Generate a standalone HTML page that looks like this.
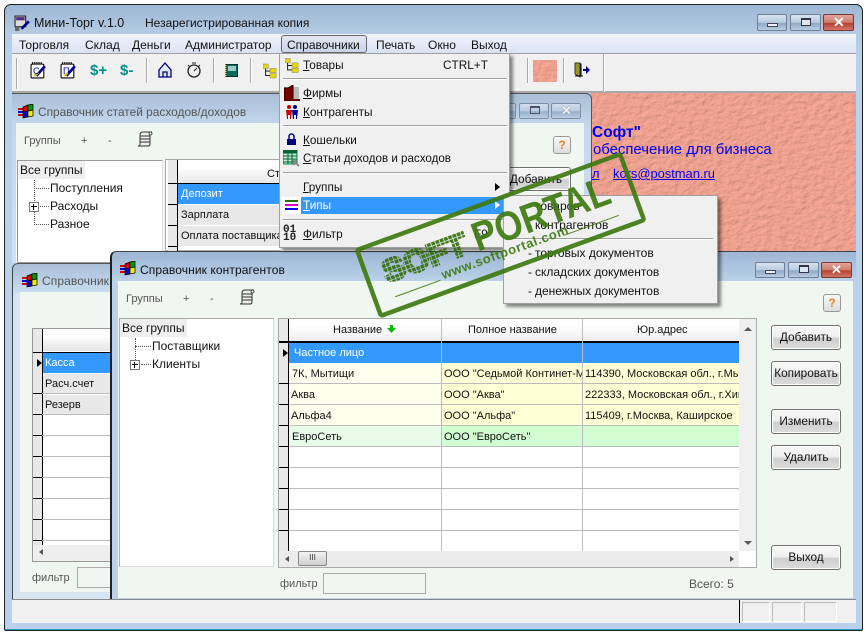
<!DOCTYPE html>
<html><head><meta charset="utf-8"><style>
html,body{margin:0;padding:0;background:#fff;width:868px;height:637px;overflow:hidden}
*{box-sizing:border-box}
body{position:relative;font:12px/14px "Liberation Sans","DejaVu Sans",sans-serif;color:#111}
.a{position:absolute}
.t{position:absolute;white-space:nowrap;line-height:14px;margin-top:1px}
.s{font-size:11px}
.m{font-size:11.8px}
.g{color:#555}
.btn{position:absolute;width:70px;height:25px;border:1px solid #707070;border-radius:3px;background:linear-gradient(#f6f6f6 0,#f0f0f0 45%,#cfcfcf 55%,#dcdcdc 100%);text-align:center;line-height:23px;font-size:11.8px;box-shadow:inset 0 0 0 1px #fff}
.wb{position:absolute;height:16px;border:1px solid #6f7f95;border-radius:2px;background:linear-gradient(#d8e3f0,#b9cbe0 50%,#8fa8c6 55%,#b9cde2)}
.wb.x{background:linear-gradient(#e2a49a,#cf7b6c 50%,#b5402f 55%,#d0776a);border-color:#7a3a33}
.sep{position:absolute;height:2px;background:#a0a0a0;border-bottom:1px solid #fff}
u{text-decoration:underline}
.vs{position:absolute;width:2px;background:#aaa;border-right:1px solid #fff}
.h{background:#3399ff;color:#fff}
</style></head><body>
<svg width="0" height="0" style="position:absolute">
<defs>
<symbol id="flag" viewBox="0 0 16 16"><rect x="0" y="4" width="5" height="2" fill="#c00"/><rect x="0" y="7" width="5" height="2" fill="#00c"/><rect x="0" y="10" width="5" height="2" fill="#c00"/><path d="M5 3L10 1V7L5 8Z" fill="#d00" stroke="#000" stroke-width=".7"/><path d="M10 1L15 0V6L10 7Z" fill="#090" stroke="#000" stroke-width=".7"/><path d="M5 8L10 7V13L5 14Z" fill="#00c" stroke="#000" stroke-width=".7"/><path d="M10 7L15 6V12L10 13Z" fill="#ee0" stroke="#000" stroke-width=".7"/></symbol>
<symbol id="tree" viewBox="0 0 16 16"><path d="M3 4V13H8M3 8H8" stroke="#000" fill="none"/><rect x="0" y="0" width="6" height="5" fill="#e8d800" stroke="#886"  stroke-width=".6"/><rect x="8" y="5" width="7" height="5" fill="#e8d800" stroke="#886" stroke-width=".6"/><rect x="8" y="11" width="7" height="5" fill="#e8d800" stroke="#886" stroke-width=".6"/></symbol>
<symbol id="note" viewBox="0 0 16 16"><rect x="1" y="2" width="12" height="13" rx="1" fill="#fff" stroke="#000"/><path d="M2 1h10" stroke="#000" stroke-dasharray="1 1" stroke-width="2"/><path d="M6 13L14 4" stroke="#000080" stroke-width="2.5"/><path d="M4 13L8 10" stroke="#d8c000" stroke-width="2"/></symbol>
<symbol id="scroll" viewBox="0 0 16 16"><path d="M3 4C3 2 4 1 6 1H15C13 1 13 3 13 4V13C13 15 12 15 10 15H1C3 15 3 14 3 13Z" fill="#eee" stroke="#333"/><path d="M3 5H13M3 8H13M3 11H13" stroke="#333"/><circle cx="13.500" cy="2.500" r="1.500" fill="#fff" stroke="#333" stroke-width=".8"/></symbol>
<pattern id="dots" width="4.5" height="4.5" patternUnits="userSpaceOnUse"><rect width="3.6" height="3.6" fill="#35700c"/></pattern>
<filter id="tex" x="0" y="0" width="100%" height="100%"><feTurbulence type="fractalNoise" baseFrequency=".14 .2" numOctaves="3" seed="7" result="n"/><feDiffuseLighting in="n" surfaceScale="1" diffuseConstant="1" lighting-color="#fbaa98" result="l"><feDistantLight azimuth="45" elevation="62"/></feDiffuseLighting></filter>
</defs></svg>

<!-- outer window -->
<div class="a" style="left:4px;top:4px;width:859px;height:627px;border:1px solid #222;border-radius:7px 7px 2px 2px;background:linear-gradient(#9db6d3 0,#b5cbe3 28px,#b9d1ea 60px);box-shadow:inset 0 -1px 0 #2aa0c0"></div>
<svg class="a" style="left:14px;top:15px" width="17" height="17" viewBox="0 0 16 16"><rect x="1" y="1" width="10" height="10" fill="#ddd" stroke="#222"/><rect x="2" y="2" width="8" height="3" fill="#503080"/><rect x="1" y="11" width="4" height="4" fill="#666"/><path d="M7 13L14 6" stroke="#000080" stroke-width="2.5"/></svg>
<div class="t" style="left:34px;top:15px;font-size:12.5px;color:#111">Мини-Торг v.1.0</div>
<div class="t" style="left:145px;top:15px;font-size:12px;color:#111">Незарегистрированная копия</div>
<div class="wb" style="left:757px;top:14px;width:30px;height:17px"><div class="a" style="left:9px;top:8px;width:11px;height:4px;background:#eef;border:1px solid #445"></div></div>
<div class="wb" style="left:790px;top:14px;width:31px;height:17px"><div class="a" style="left:10px;top:3px;width:10px;height:8px;border:1px solid #334;border-top-width:2px;background:#dde6f0"></div></div>
<div class="wb x" style="left:823px;top:14px;width:31px;height:17px"><div class="t" style="left:9px;top:-1px;color:#fff;font:bold 14px/15px 'Liberation Sans',sans-serif">✕</div></div>

<!-- menubar -->
<div class="a" style="left:12px;top:34px;width:844px;height:19px;background:linear-gradient(#f2f5fb,#d9e2f3)"></div>
<div class="t" style="left:19px;top:37px">Торговля</div>
<div class="t" style="left:85px;top:37px">Склад</div>
<div class="t" style="left:132px;top:37px">Деньги</div>
<div class="t" style="left:185px;top:37px">Администратор</div>
<div class="a" style="left:281px;top:35px;width:86px;height:18px;border:1px solid #666;border-radius:3px;background:linear-gradient(#e3e8f2,#c9d4e8)"></div>
<div class="t" style="left:287px;top:37px">Справочники</div>
<div class="t" style="left:376px;top:37px">Печать</div>
<div class="t" style="left:428px;top:37px">Окно</div>
<div class="t" style="left:471px;top:37px">Выход</div>

<!-- toolbar -->
<div class="a" style="left:12px;top:53px;width:844px;height:40px;background:#f0f0f0;border-top:1px solid #a0a0a0;border-bottom:2px solid #a8a8a8"></div>
<div class="vs" style="left:16px;top:58px;height:31px"></div>
<div class="vs" style="left:146px;top:58px;height:25px"></div>
<div class="vs" style="left:213px;top:58px;height:25px"></div>
<div class="vs" style="left:250px;top:58px;height:25px"></div>
<div class="vs" style="left:527px;top:58px;height:25px"></div>
<div class="vs" style="left:563px;top:58px;height:25px"></div>
<div class="vs" style="left:603px;top:54px;height:38px"></div>
<svg class="a" style="left:30px;top:62px" width="17" height="17"><use href="#note"/></svg>
<div class="t" style="left:33px;top:63px;font-size:9px;color:#00a">С</div>
<svg class="a" style="left:60px;top:62px" width="17" height="17"><use href="#note"/></svg>
<div class="t" style="left:63px;top:63px;font-size:9px;color:#00a">П</div>
<div class="t" style="left:90px;top:63px;font:bold 15px/14px 'Liberation Sans',sans-serif;color:#008f8f">$+</div>
<div class="t" style="left:120px;top:63px;font:bold 15px/14px 'Liberation Sans',sans-serif;color:#008f8f">$-</div>
<svg class="a" style="left:157px;top:62px" width="16" height="16" viewBox="0 0 16 16"><path d="M2 8L8 1L14 8V15H2Z" fill="#dfe8f5" stroke="#00007f" stroke-width="1.3"/><path d="M6 15V10H10V15" fill="none" stroke="#00007f" stroke-width="1.3"/></svg>
<svg class="a" style="left:186px;top:62px" width="16" height="16" viewBox="0 0 16 16"><circle cx="8" cy="9" r="6" fill="#eee" stroke="#222" stroke-width="1.3"/><path d="M8 9L11 6M6 1h4M2 3l2 2M14 3l-2 2" stroke="#222"/></svg>
<svg class="a" style="left:225px;top:64px" width="13" height="13" viewBox="0 0 13 13"><rect x="1" y="0" width="12" height="13" fill="#0a6a5a" stroke="#000"/><rect x="3" y="2" width="8" height="5" fill="#9cc"/><path d="M1 1v12" stroke="#dd0" stroke-dasharray="1 1"/></svg>
<svg class="a" style="left:263px;top:63px" width="14" height="16"><use href="#tree"/></svg>
<svg class="a" style="left:533px;top:60px" width="24" height="22"><rect width="24" height="22" fill="#fbb0a0" filter="url(#tex)"/></svg>
<svg class="a" style="left:574px;top:62px" width="17" height="17" viewBox="0 0 17 17"><path d="M1 1H6V15L1 12Z" fill="#98981c" stroke="#333"/><path d="M6 2h1v12M1 14h8" stroke="#000" fill="none"/><path d="M9 7h3V4l4 4-4 4V9H9Z" fill="#00007f"/></svg>

<!-- salmon mdi background -->
<svg class="a" style="left:591px;top:93px" width="265" height="160"><rect width="265" height="160" fill="#fbb0a0" filter="url(#tex)"/></svg>
<div class="t" style="left:592px;top:123px;font:bold 15.5px/17px 'Liberation Sans',sans-serif;color:#0000f0">Софт"</div>
<div class="t" style="left:593px;top:141px;font-size:14.9px;line-height:16px;color:#0000f0">обеспечение для бизнеса</div>
<div class="t" style="left:592px;top:166px;font-size:12.9px;color:#0000f0"><u>л</u></div>
<div class="t" style="left:613px;top:166px;font-size:12.9px;color:#0000f0"><u>kors@postman.ru</u></div>

<!-- window 1 -->
<div class="a" style="left:12px;top:93px;width:580px;height:170px;background:linear-gradient(#a9bfd8,#c3d7ec 30px,#cfe0f2);border-radius:0 6px 0 0;border-top:1px solid #555;border-right:1px solid #555"></div>
<div class="a" style="left:16px;top:123px;width:568px;height:140px;background:#f0f6f0"></div>
<svg class="a" style="left:18px;top:104px" width="16" height="16"><use href="#flag"/></svg>
<div class="t g" style="left:38px;top:104px;font-size:11.9px;color:#555">Справочник статей расходов/доходов</div>
<div class="wb" style="left:495px;top:103px;width:21px;opacity:.8"></div>
<div class="wb" style="left:519px;top:103px;width:30px;opacity:.8"><div class="a" style="left:10px;top:2px;width:10px;height:8px;border:1px solid #334;border-top-width:2px"></div></div>
<div class="wb" style="left:551px;top:103px;width:30px;opacity:.8"><div class="t" style="left:9px;top:-1px;color:#fff;font:bold 13px/14px 'Liberation Sans',sans-serif;text-shadow:0 0 1px #333">✕</div></div>
<div class="t g s" style="left:24px;top:133px">Группы</div>
<div class="t g s" style="left:81px;top:133px">+</div>
<div class="t g s" style="left:108px;top:133px">-</div>
<svg class="a" style="left:137px;top:131px" width="16" height="16"><use href="#scroll"/></svg>
<div class="a" style="left:553px;top:136px;width:18px;height:18px;border:1px solid #999;border-radius:3px;background:linear-gradient(#f8f8f8,#ddd);color:#f08020;font:bold 12px/16px 'Liberation Sans',sans-serif;text-align:center">?</div>
<div class="a" style="left:17px;top:160px;width:146px;height:103px;background:#fff;border:1px solid #999;border-right-color:#ddd"></div>
<div class="a" style="left:19px;top:161px;width:66px;height:18px;background:#eee"></div>
<div class="t" style="left:20px;top:162px">Все группы</div>
<div class="a" style="left:34px;top:180px;height:45px;border-left:1px dotted #555"></div>
<div class="a" style="left:34px;top:188px;width:15px;border-top:1px dotted #555"></div>
<div class="a" style="left:38px;top:206px;width:11px;border-top:1px dotted #555"></div>
<div class="a" style="left:34px;top:224px;width:15px;border-top:1px dotted #555"></div>
<div class="t" style="left:50px;top:180px">Поступления</div>
<div class="t" style="left:50px;top:198px">Расходы</div>
<div class="t" style="left:50px;top:216px">Разное</div>
<div class="a" style="left:29px;top:202px;width:10px;height:10px;border:1px solid #777;background:#fff"><div class="a" style="left:1px;top:3px;width:6px;height:1px;background:#000"></div><div class="a" style="left:3px;top:1px;width:1px;height:6px;background:#000"></div></div>
<div class="a" style="left:165px;top:159px;width:116px;height:92px;background:#fff;border:1px solid #aaa;border-right:0"></div>
<div class="a" style="left:168px;top:160px;width:9px;height:91px;background:#e8e8e8"></div>
<div class="a" style="left:177px;top:160px;width:1px;height:91px;background:#000"></div>
<div class="a" style="left:178px;top:170px;width:103px;height:13px;background:linear-gradient(#fafafa,#e8e8e8)"></div>
<div class="a" style="left:168px;top:183px;width:113px;height:1px;background:#000"></div>
<div class="t s" style="left:267px;top:166px">Ст</div>
<div class="a h" style="left:178px;top:184px;width:103px;height:20px"></div>
<div class="t s" style="left:181px;top:186px;color:#fff">Депозит</div>
<div class="a" style="left:178px;top:205px;width:103px;height:20px;background:#e8e8e8"></div>
<div class="t s" style="left:181px;top:207px">Зарплата</div>
<div class="a" style="left:178px;top:226px;width:103px;height:20px;background:#e8e8e8"></div>
<div class="t s" style="left:181px;top:228px">Оплата поставщика</div>
<div class="a" style="left:168px;top:204px;width:10px;height:1px;background:#000"></div>
<div class="a" style="left:168px;top:225px;width:10px;height:1px;background:#000"></div>
<div class="a" style="left:168px;top:246px;width:10px;height:1px;background:#000"></div>
<div class="btn" style="left:501px;top:167px;height:24px">Добавить</div>

<!-- window 2 -->
<div class="a" style="left:12px;top:263px;width:110px;height:337px;background:linear-gradient(#a9bfd8,#c9dbee 28px,#d7e4f2 30px);border-top:1px solid #555;border-left:1px solid #444;border-radius:6px 0 0 0"></div>
<div class="a" style="left:20px;top:292px;width:92px;height:300px;background:#f0f6f0"></div>
<svg class="a" style="left:22px;top:273px" width="16" height="16"><use href="#flag"/></svg>
<div class="t" style="left:42px;top:273px;font-size:12px;letter-spacing:.1px;color:#555">Справочник</div>
<div class="a" style="left:32px;top:328px;width:80px;height:234px;background:#fff;border:1px solid #999"></div>
<div class="a" style="left:33px;top:329px;width:9px;height:216px;background:#e8e8e8"></div>
<div class="a" style="left:42px;top:329px;width:1px;height:216px;background:#000"></div>
<div class="a" style="left:43px;top:338px;width:70px;height:13px;background:linear-gradient(#fafafa,#e4e4e4)"></div>
<div class="a" style="left:33px;top:352px;width:78px;height:1px;background:#000"></div>
<div class="a h" style="left:43px;top:353px;width:68px;height:20px"></div>
<div class="t s" style="left:45px;top:355px;color:#fff">Касса</div>
<div class="a" style="left:43px;top:374px;width:68px;height:20px;background:#e8e8e8"></div>
<div class="t s" style="left:45px;top:376px">Расч.счет</div>
<div class="a" style="left:43px;top:395px;width:68px;height:20px;background:#e8e8e8"></div>
<div class="t s" style="left:45px;top:397px">Резерв</div>
<div class="a" style="left:33px;top:373px;width:78px;height:168px;background:repeating-linear-gradient(transparent 0,transparent 20px,#bbb 20px,#bbb 21px)"></div>
<div class="a" style="left:33px;top:373px;width:9px;height:168px;background:repeating-linear-gradient(transparent 0,transparent 20px,#000 20px,#000 21px)"></div>
<div class="a" style="left:37px;top:359px;border-left:5px solid #000;border-top:4px solid transparent;border-bottom:4px solid transparent"></div>
<div class="a" style="left:33px;top:545px;width:78px;height:16px;background:#eee"></div>
<div class="a" style="left:39px;top:549px;border-right:4px solid #555;border-top:3px solid transparent;border-bottom:3px solid transparent"></div>
<div class="t g s" style="left:32px;top:570px">фильтр</div>
<div class="a" style="left:77px;top:567px;width:36px;height:21px;border:1px solid #aaa"></div>

<!-- window 3 -->
<div class="a" style="left:110px;top:251px;width:746px;height:349px;background:linear-gradient(#9db6d3,#bcd2ea 30px);border-top:1px solid #444;border-left:2px solid #222;border-radius:6px 0 0 0"></div>
<div class="a" style="left:118px;top:281px;width:735px;height:317px;background:#f0f6f0"></div>
<svg class="a" style="left:120px;top:261px" width="16" height="16"><use href="#flag"/></svg>
<div class="t" style="left:140px;top:262px;font-size:12px;letter-spacing:.1px;color:#111">Справочник контрагентов</div>
<div class="wb" style="left:755px;top:262px;width:30px;height:16px"><div class="a" style="left:9px;top:7px;width:11px;height:4px;background:#eef;border:1px solid #445"></div></div>
<div class="wb" style="left:788px;top:262px;width:31px;height:16px"><div class="a" style="left:10px;top:2px;width:10px;height:8px;border:1px solid #334;border-top-width:2px;background:#dde6f0"></div></div>
<div class="wb x" style="left:821px;top:262px;width:31px;height:16px"><div class="t" style="left:9px;top:-1px;color:#fff;font:bold 13px/14px 'Liberation Sans',sans-serif">✕</div></div>
<div class="t g s" style="left:126px;top:291px">Группы</div>
<div class="t g s" style="left:183px;top:291px">+</div>
<div class="t g s" style="left:210px;top:291px">-</div>
<svg class="a" style="left:239px;top:289px" width="16" height="16"><use href="#scroll"/></svg>
<div class="a" style="left:823px;top:294px;width:18px;height:18px;border:1px solid #999;border-radius:3px;background:linear-gradient(#f8f8f8,#ddd);color:#f08020;font:bold 12px/16px 'Liberation Sans',sans-serif;text-align:center">?</div>

<div class="a" style="left:119px;top:318px;width:155px;height:249px;background:#fff;border:1px solid #aaa;border-right-color:#ddd;border-bottom-color:#ddd"></div>
<div class="a" style="left:120px;top:319px;width:67px;height:18px;background:#eee"></div>
<div class="t" style="left:122px;top:320px">Все группы</div>
<div class="a" style="left:135px;top:338px;height:26px;border-left:1px dotted #555"></div>
<div class="a" style="left:135px;top:346px;width:16px;border-top:1px dotted #555"></div>
<div class="a" style="left:141px;top:364px;width:10px;border-top:1px dotted #555"></div>
<div class="t" style="left:152px;top:338px">Поставщики</div>
<div class="t" style="left:152px;top:356px">Клиенты</div>
<div class="a" style="left:130px;top:360px;width:10px;height:10px;border:1px solid #777;background:#fff"><div class="a" style="left:1px;top:3px;width:6px;height:1px;background:#000"></div><div class="a" style="left:3px;top:1px;width:1px;height:6px;background:#000"></div></div>

<!-- grid -->
<div class="a" style="left:278px;top:318px;width:479px;height:250px;background:#fff;border:1px solid #aaa"></div>
<div class="a" style="left:279px;top:319px;width:9px;height:232px;background:#e8e8e8"></div>
<div class="a" style="left:288px;top:319px;width:1px;height:232px;background:#000"></div>
<div class="a" style="left:289px;top:319px;width:450px;height:22px;background:linear-gradient(#fff 25%,#eee)"></div>
<div class="a" style="left:279px;top:341px;width:460px;height:2px;background:#000"></div>
<div class="a h" style="left:289px;top:343px;width:450px;height:20px"></div>
<div class="a" style="left:289px;top:363px;width:153px;height:63px;background:#ffffee"></div>
<div class="a" style="left:442px;top:363px;width:297px;height:63px;background:#ffffd6"></div>
<div class="a" style="left:289px;top:426px;width:153px;height:21px;background:#e9fce9"></div>
<div class="a" style="left:442px;top:426px;width:297px;height:21px;background:#d2fdd2"></div>
<div class="a" style="left:289px;top:363px;width:450px;height:189px;background:repeating-linear-gradient(transparent 0,transparent 20px,#bbb 20px,#bbb 21px)"></div>
<div class="a" style="left:279px;top:363px;width:9px;height:189px;background:repeating-linear-gradient(transparent 0,transparent 20px,#000 20px,#000 21px)"></div>
<div class="a" style="left:441px;top:319px;width:1px;height:232px;background:#bbb"></div>
<div class="a" style="left:582px;top:319px;width:1px;height:232px;background:#bbb"></div>
<div class="t s" style="left:333px;top:322px">Название</div>
<svg class="a" style="left:387px;top:325px" width="9" height="8"><path d="M3 0h3v3h3L4.500 8 0 3h3Z" fill="#0b0"/></svg>
<div class="t s" style="left:468px;top:322px">Полное название</div>
<div class="t s" style="left:637px;top:322px">Юр.адрес</div>
<div class="a" style="left:283px;top:349px;border-left:5px solid #000;border-top:4px solid transparent;border-bottom:4px solid transparent"></div>
<div class="t s" style="left:294px;top:345px;color:#fff">Частное лицо</div>
<div class="t s" style="left:292px;top:366px">7К, Мытищи</div>
<div class="t s" style="left:291px;top:387px">Аква</div>
<div class="t s" style="left:291px;top:408px">Альфа4</div>
<div class="t s" style="left:292px;top:429px">ЕвроСеть</div>
<div class="t s" style="left:444px;top:366px;width:138px;overflow:hidden">ООО "Седьмой Континет-М</div>
<div class="t s" style="left:444px;top:387px">ООО "Аква"</div>
<div class="t s" style="left:444px;top:408px">ООО "Альфа"</div>
<div class="t s" style="left:444px;top:429px">ООО "ЕвроСеть"</div>
<div class="t s" style="left:585px;top:366px;width:154px;overflow:hidden">114390, Московская обл., г.Мытищи</div>
<div class="t s" style="left:585px;top:387px;width:154px;overflow:hidden">222333, Московская обл., г.Химки</div>
<div class="t s" style="left:585px;top:408px;width:154px;overflow:hidden">115409, г.Москва, Каширское</div>
<div class="a" style="left:739px;top:319px;width:17px;height:232px;background:#f0f0f0"></div>
<div class="a" style="left:744px;top:327px;border-bottom:4px solid #555;border-left:4px solid transparent;border-right:4px solid transparent"></div>
<div class="a" style="left:744px;top:541px;border-top:4px solid #555;border-left:4px solid transparent;border-right:4px solid transparent"></div>
<div class="a" style="left:279px;top:551px;width:460px;height:16px;background:#ececec"></div>
<div class="a" style="left:285px;top:556px;border-right:4px solid #555;border-top:3px solid transparent;border-bottom:3px solid transparent"></div>
<div class="a" style="left:730px;top:556px;border-left:4px solid #555;border-top:3px solid transparent;border-bottom:3px solid transparent"></div>
<div class="a" style="left:298px;top:551px;width:29px;height:15px;border:1px solid #888;border-radius:2px;background:linear-gradient(#f2f2f2,#cfcfcf);font:8px/12px 'Liberation Sans',sans-serif;text-align:center;color:#333">III</div>

<div class="btn" style="left:771px;top:325px">Добавить</div>
<div class="btn" style="left:771px;top:361px">Копировать</div>
<div class="btn" style="left:771px;top:409px">Изменить</div>
<div class="btn" style="left:771px;top:445px">Удалить</div>
<div class="btn" style="left:771px;top:545px">Выход</div>
<div class="t g s" style="left:280px;top:576px">фильтр</div>
<div class="a" style="left:323px;top:573px;width:103px;height:21px;border:1px solid #aaa"></div>
<div class="t g" style="left:689px;top:576px;font-size:12px">Всего: 5</div>

<!-- status -->
<div class="a" style="left:12px;top:599px;width:844px;height:24px;background:#f0f0f0;border-top:1px solid #888"></div>
<div class="a" style="left:739px;top:600px;width:1px;height:23px;background:#000"></div>
<div class="a" style="left:742px;top:602px;width:28px;height:20px;border:1px solid #bbb;border-bottom-color:#fff;border-right-color:#fff"></div>
<div class="a" style="left:772px;top:602px;width:30px;height:20px;border:1px solid #bbb;border-bottom-color:#fff;border-right-color:#fff"></div>
<div class="a" style="left:804px;top:602px;width:33px;height:20px;border:1px solid #bbb;border-bottom-color:#fff;border-right-color:#fff"></div>

<!-- dropdown -->
<div class="a" style="left:279px;top:53px;width:231px;height:195px;background:#f0f0f0;border:1px solid #a0a0a0;box-shadow:3px 3px 3px rgba(0,0,0,.45)"></div>
<svg class="a" style="left:285px;top:58px" width="14" height="15"><use href="#tree"/></svg>
<div class="t m" style="left:303px;top:57px"><u>Т</u>овары</div>
<div class="t m" style="left:443px;top:57px">CTRL+T</div>
<div class="sep" style="left:283px;top:78px;width:224px"></div>
<svg class="a" style="left:284px;top:85px" width="16" height="16" viewBox="0 0 16 16"><rect x="0" y="2" width="15" height="13" fill="#bbb"/><path d="M0 3H4L9 0V15H0Z" fill="#7a0000" stroke="#200"/><rect x="0" y="14" width="16" height="2" fill="#600"/></svg>
<div class="t m" style="left:303px;top:85px"><u>Ф</u>ирмы</div>
<svg class="a" style="left:285px;top:105px" width="14" height="14" viewBox="0 0 14 14"><circle cx="4" cy="2" r="2" fill="#c00"/><path d="M1 5H7L6 14H5V10H3V14H2Z" fill="#c00"/><circle cx="10" cy="2" r="2" fill="#00a"/><path d="M7 5H13L12 14H11V10H9V14H8Z" fill="#00a"/></svg>
<div class="t m" style="left:303px;top:104px"><u>К</u>онтрагенты</div>
<div class="sep" style="left:283px;top:125px;width:224px"></div>
<svg class="a" style="left:286px;top:133px" width="11" height="13" viewBox="0 0 11 13"><path d="M3 6V3.500a2.500 2.500 0 0 1 5 0V6" fill="none" stroke="#00007f" stroke-width="1.500"/><rect x="1" y="6" width="9" height="6" fill="#00007f"/></svg>
<div class="t m" style="left:303px;top:132px"><u>К</u>ошельки</div>
<svg class="a" style="left:283px;top:150px" width="17" height="17" viewBox="0 0 17 17"><rect x="0" y="0" width="14" height="14" fill="#cfe8d8" stroke="#084"/><path d="M0 3H14M0 6H14M0 9H14M0 12H14M5 3V14M9 3V14" stroke="#063"/><rect x="0" y="0" width="14" height="3" fill="#063"/><path d="M10 10L16 16M13 10L10 15" stroke="#888" stroke-width="2"/></svg>
<div class="t" style="left:303px;top:151px;font-size:11.6px"><u>С</u>татьи доходов и расходов</div>
<div class="sep" style="left:283px;top:172px;width:224px"></div>
<div class="t m" style="left:303px;top:179px"><u>Г</u>руппы</div>
<div class="a" style="left:495px;top:183px;border-left:5px solid #000;border-top:4px solid transparent;border-bottom:4px solid transparent"></div>
<div class="a" style="left:282px;top:197px;width:19px;height:17px;background:#fff"></div>
<div class="a" style="left:285px;top:200px;width:13px;height:2px;background:#2e6b00"></div>
<div class="a" style="left:285px;top:204px;width:13px;height:2px;background:#e000c0"></div>
<div class="a" style="left:285px;top:208px;width:13px;height:2px;background:#0000ff"></div>
<div class="a h" style="left:301px;top:197px;width:202px;height:17px"></div>
<div class="t m" style="left:303px;top:197px;color:#fff"><u>Т</u>ипы</div>
<div class="a" style="left:495px;top:201px;border-left:5px solid #fff;border-top:4px solid transparent;border-bottom:4px solid transparent"></div>
<div class="sep" style="left:283px;top:219px;width:224px"></div>
<div class="t" style="left:283px;top:225px;font:bold 11px/8px 'Liberation Mono',monospace;white-space:pre-line;color:#222">01
10</div>
<div class="t m" style="left:303px;top:226px"><u>Ф</u>ильтр</div>
<div class="t m" style="left:474px;top:226px">F9</div>

<!-- submenu -->
<div class="a" style="left:503px;top:195px;width:215px;height:109px;background:#f0f0f0;border:1px solid #a0a0a0;box-shadow:3px 3px 3px rgba(0,0,0,.45)"></div>
<div class="t" style="left:528px;top:198px">-</div><div class="t" style="left:535px;top:198px">товаров</div>
<div class="t" style="left:528px;top:217px">-</div><div class="t" style="left:535px;top:217px">контрагентов</div>
<div class="sep" style="left:507px;top:238px;width:206px"></div>
<div class="t" style="left:528px;top:245px">-</div><div class="t" style="left:535px;top:245px">торговых документов</div>
<div class="t" style="left:528px;top:264px">-</div><div class="t" style="left:535px;top:264px">складских документов</div>
<div class="t" style="left:528px;top:283px">-</div><div class="t" style="left:535px;top:283px">денежных документов</div>

<!-- stamp -->
<svg class="a" style="left:0;top:0" width="868" height="637">
<g transform="translate(357 250) rotate(-20)" opacity=".92">
<rect x="0" y="0" width="280" height="70" rx="2" fill="none" stroke="#3f7a12" stroke-width="4.500"/>
<text x="17" y="41" font-family="Liberation Sans" font-weight="bold" font-size="31" textLength="88" lengthAdjust="spacingAndGlyphs" fill="url(#dots)" stroke="url(#dots)" stroke-width="3">SOFT</text>
<text x="113" y="43" font-family="Liberation Sans" font-weight="bold" font-size="41" textLength="144" lengthAdjust="spacingAndGlyphs" fill="#3f7a12">PORTAL</text>
<text x="71" y="57" font-family="Liberation Sans" font-weight="bold" font-size="13" letter-spacing=".6" fill="#3f7a12">www.softportal.com</text>
<path d="M20 57H68M200 57H258" stroke="#3f7a12" fill="none"/>
</g></svg>
</body></html>
